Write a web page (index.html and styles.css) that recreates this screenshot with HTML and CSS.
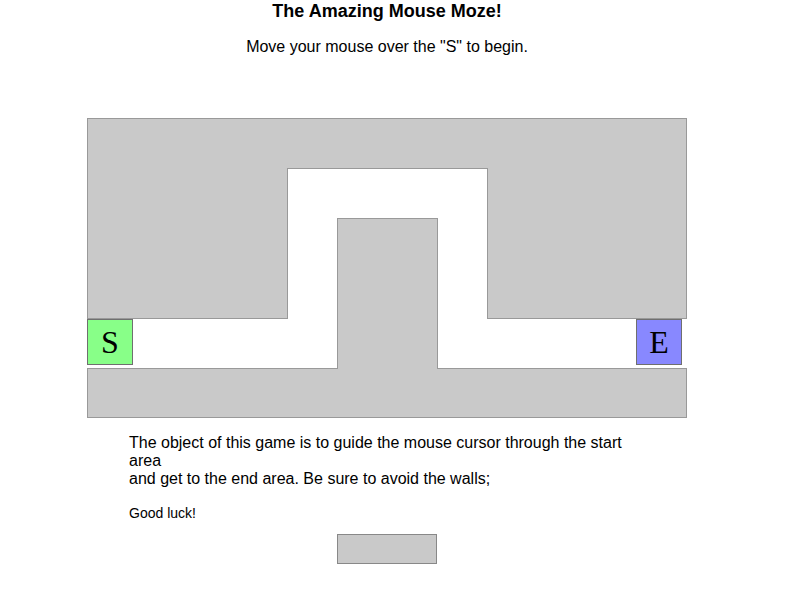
FILE: index.html
```
<!DOCTYPE html>
<html>
<head>
<meta charset="utf-8">
<title>The Amazing Mouse Maze</title>
<link rel="stylesheet" href="styles.css">
</head>
<body>
<div class="page">
  <h1 class="title">The Amazing Mouse Moze!</h1>
  <h2 class="subtitle">Move your mouse over the "S" to begin.</h2>
  <div class="maze">
    <svg class="walls" width="600" height="300" viewBox="0 0 600 300">
      <polygon points="0.5,0.5 599.5,0.5 599.5,200.5 400.5,200.5 400.5,50.5 200.5,50.5 200.5,200.5 0.5,200.5"/>
      <polygon points="0.5,250.5 250.5,250.5 250.5,100.5 350.5,100.5 350.5,250.5 599.5,250.5 599.5,299.5 0.5,299.5"/>
    </svg>
    <div class="cell start">S</div>
    <div class="cell end">E</div>
  </div>
  <p class="intro">The object of this game is to guide the mouse cursor through the start area<br>and get to the end area. Be sure to avoid the walls;</p>
  <p class="luck">Good luck!</p>
  <div class="status"></div>
</div>
</body>
</html>
```
FILE: styles.css
```
html, body {
  margin: 0;
  padding: 0;
  background: #ffffff;
}
body {
  font-family: "Liberation Sans", Arial, sans-serif;
  color: #000;
}
.page {
  width: 774px;
  display: flex;
  flex-direction: column;
}
.title {
  margin: 1px 0 0;
  font-size: 18px;
  line-height: 20px;
  font-weight: bold;
  text-align: center;
}
.subtitle {
  margin: 16px 0 0;
  font-size: 16px;
  line-height: 20px;
  font-weight: normal;
  text-align: center;
}
.maze {
  position: relative;
  width: 600px;
  height: 300px;
  margin: 61px auto 0;
}
.walls {
  display: block;
}
.walls polygon {
  fill: #c9c9c9;
  stroke: #999999;
  stroke-width: 1;
  shape-rendering: crispEdges;
}
.cell {
  position: absolute;
  top: 201px;
  width: 44px;
  height: 44px;
  border: 1px solid #6f6f6f;
  font-family: "Liberation Serif", "Times New Roman", serif;
  font-size: 32px;
  line-height: 44px;
  text-align: center;
}
.start {
  left: 0;
  background: #88ff88;
}
.end {
  left: 549px;
  background: #8888ff;
}
.intro {
  margin: 16px 0 0 129px;
  width: 510px;
  font-size: 16px;
  line-height: 18px;
}
.luck {
  margin: 17px 0 0 129px;
  font-size: 14px;
  line-height: 16px;
}
.status {
  width: 98px;
  height: 28px;
  margin: 13px auto 0;
  background: #c9c9c9;
  border: 1px solid #888888;
}
```
